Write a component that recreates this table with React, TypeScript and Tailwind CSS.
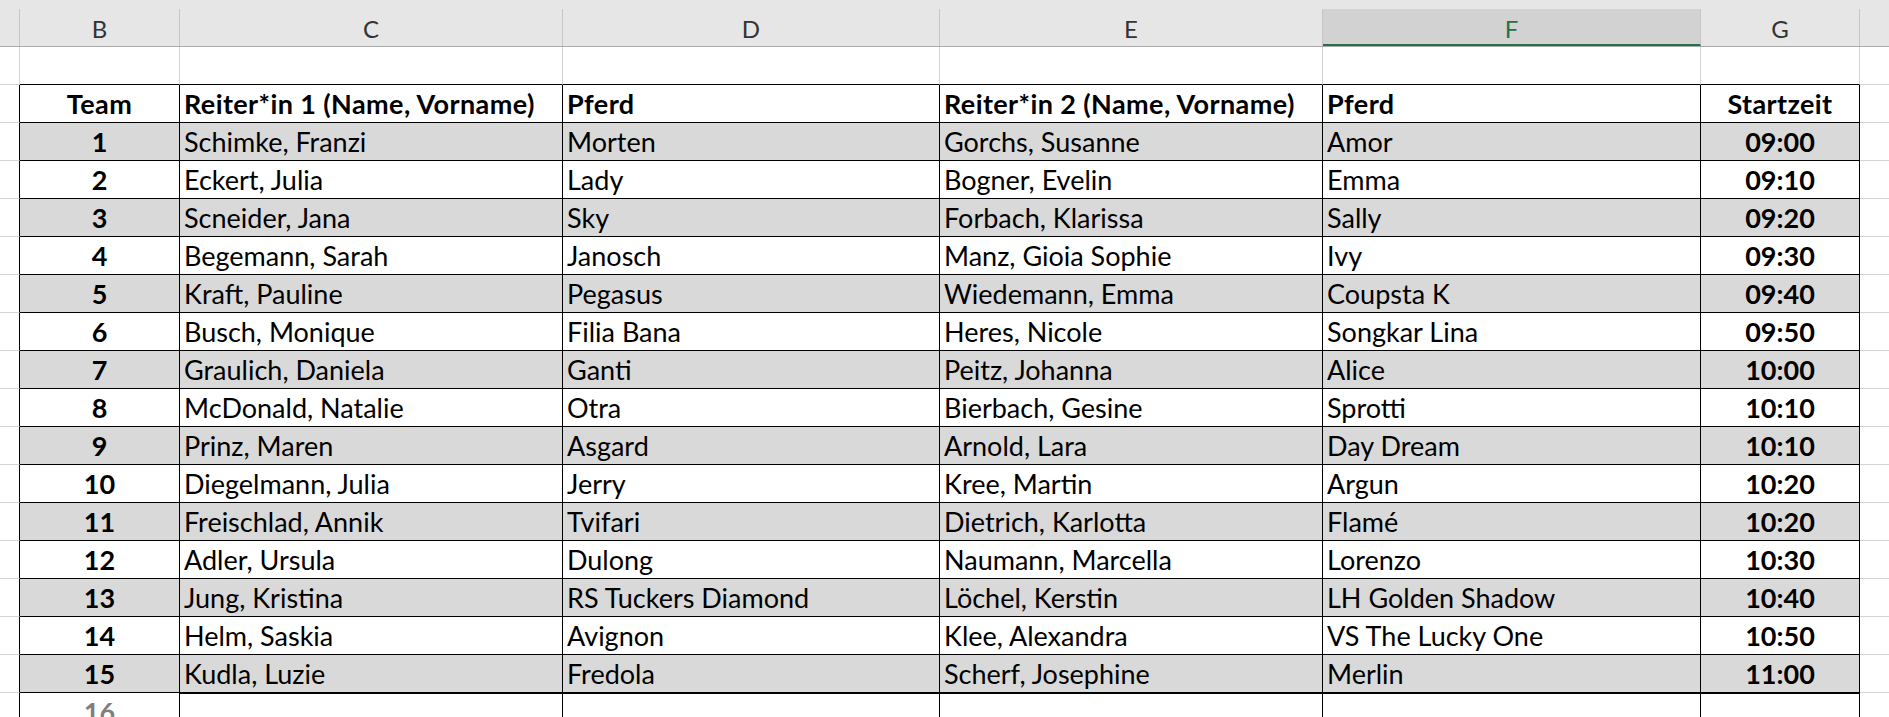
import React from 'react';

// sheet column widths: row-header stub, B..G, and the rest of the window
const COLS = ['w-[20px]', 'w-[160px]', 'w-[383px]', 'w-[377px]', 'w-[383px]', 'w-[378px]', 'w-[159px]', 'flex-1'];
const LETTERS = ['', 'B', 'C', 'D', 'E', 'F', 'G', ''];

const HEADER = ['Team', 'Reiter*in 1 (Name, Vorname)', 'Pferd', 'Reiter*in 2 (Name, Vorname)', 'Pferd', 'Startzeit'];

const TEAMS = [
  ['Schimke, Franzi',   'Morten',             'Gorchs, Susanne',    'Amor',             '09:00'],
  ['Eckert, Julia',     'Lady',               'Bogner, Evelin',     'Emma',             '09:10'],
  ['Scneider, Jana',    'Sky',                'Forbach, Klarissa',  'Sally',            '09:20'],
  ['Begemann, Sarah',   'Janosch',            'Manz, Gioia Sophie', 'Ivy',              '09:30'],
  ['Kraft, Pauline',    'Pegasus',            'Wiedemann, Emma',    'Coupsta K',        '09:40'],
  ['Busch, Monique',    'Filia Bana',         'Heres, Nicole',      'Songkar Lina',     '09:50'],
  ['Graulich, Daniela', 'Ganti',              'Peitz, Johanna',     'Alice',            '10:00'],
  ['McDonald, Natalie', 'Otra',               'Bierbach, Gesine',   'Sprotti',          '10:10'],
  ['Prinz, Maren',      'Asgard',             'Arnold, Lara',       'Day Dream',        '10:10'],
  ['Diegelmann, Julia', 'Jerry',              'Kree, Martin',       'Argun',            '10:20'],
  ['Freischlad, Annik', 'Tvifari',            'Dietrich, Karlotta', 'Flamé',            '10:20'],
  ['Adler, Ursula',     'Dulong',             'Naumann, Marcella',  'Lorenzo',          '10:30'],
  ['Jung, Kristina',    'RS Tuckers Diamond', 'Löchel, Kerstin',    'LH Golden Shadow', '10:40'],
  ['Helm, Saskia',      'Avignon',            'Klee, Alexandra',    'VS The Lucky One', '10:50'],
  ['Kudla, Luzie',      'Fredola',            'Scherf, Josephine',  'Merlin',           '11:00'],
];

const TableRow: React.FC<{ cells: string[]; shaded?: boolean; header?: boolean }> = ({ cells, shaded, header }) => (
  <div className="flex h-[38px] shrink-0">
    <div className={`${COLS[0]} shrink-0 border-r border-b border-r-black border-b-[#d4d4d4]`} />
    {cells.map((c, i) => {
      const center = i === 0 || i === 5;
      return (
        <div key={i}
          className={`${COLS[i + 1]} shrink-0 border-r border-b border-black px-[4px] leading-[37px] whitespace-nowrap overflow-hidden
            ${shaded ? 'bg-[#d9d9d9]' : 'bg-white'} ${center ? 'text-center' : ''} ${header ? 'font-bold tracking-[0.4px]' : center ? 'font-bold' : ''}`}>
          {c}
        </div>
      );
    })}
    <div className="flex-1 border-b border-b-[#d4d4d4]" />
  </div>
);

export default function App() {
  return (
    <div className="h-[717px] w-[1889px] overflow-hidden bg-white text-black text-[27px] font-['Lato',sans-serif] flex flex-col">
      {/* column letters */}
      <div className="flex h-[47px] shrink-0 bg-[#e6e6e6] border-b border-b-[#ababab]">
        {LETTERS.map((l, i) => (
          <div key={i} className={`${COLS[i]} shrink-0 pt-[9px] flex`}>
            {i < 7 && (
              <div className={`flex-1 flex justify-center pt-[4px] leading-[32px] text-[24px] border-r border-r-[#c6c6c6]
                ${l === 'F' ? 'bg-[#d2d2d2] text-[#217346] border-b-2 border-b-[#217346]' : 'text-[#333]'}`}>
                {l}
              </div>
            )}
          </div>
        ))}
      </div>

      {/* empty row 2 */}
      <div className="flex h-[38px] shrink-0">
        {COLS.map((w, i) => (
          <div key={i}
            className={`${w} shrink-0 border-b ${i < 7 ? 'border-r border-r-[#d4d4d4]' : ''}
              ${i > 0 && i < 7 ? 'border-b-black' : 'border-b-[#d4d4d4]'}`} />
        ))}
      </div>

      <TableRow cells={HEADER} header />
      {TEAMS.map((t, i) => (
        <TableRow key={i} cells={[String(i + 1), ...t]} shaded={i % 2 === 0} />
      ))}

      {/* row 16, cut off at the window edge */}
      <div className="flex h-[38px] shrink-0">
        <div className={`${COLS[0]} shrink-0 border-r border-r-black border-b border-b-[#d4d4d4]`} />
        <div className={`${COLS[1]} shrink-0 border-r border-r-black text-center font-bold text-[#7f7f7f] leading-[37px]`}>16</div>
        {[2, 3, 4, 5, 6].map(i => (
          <div key={i} className={`${COLS[i]} shrink-0 border-r border-r-black border-t border-t-black`} />
        ))}
        <div className="flex-1 border-b border-b-[#d4d4d4]" />
      </div>
    </div>
  );
}
